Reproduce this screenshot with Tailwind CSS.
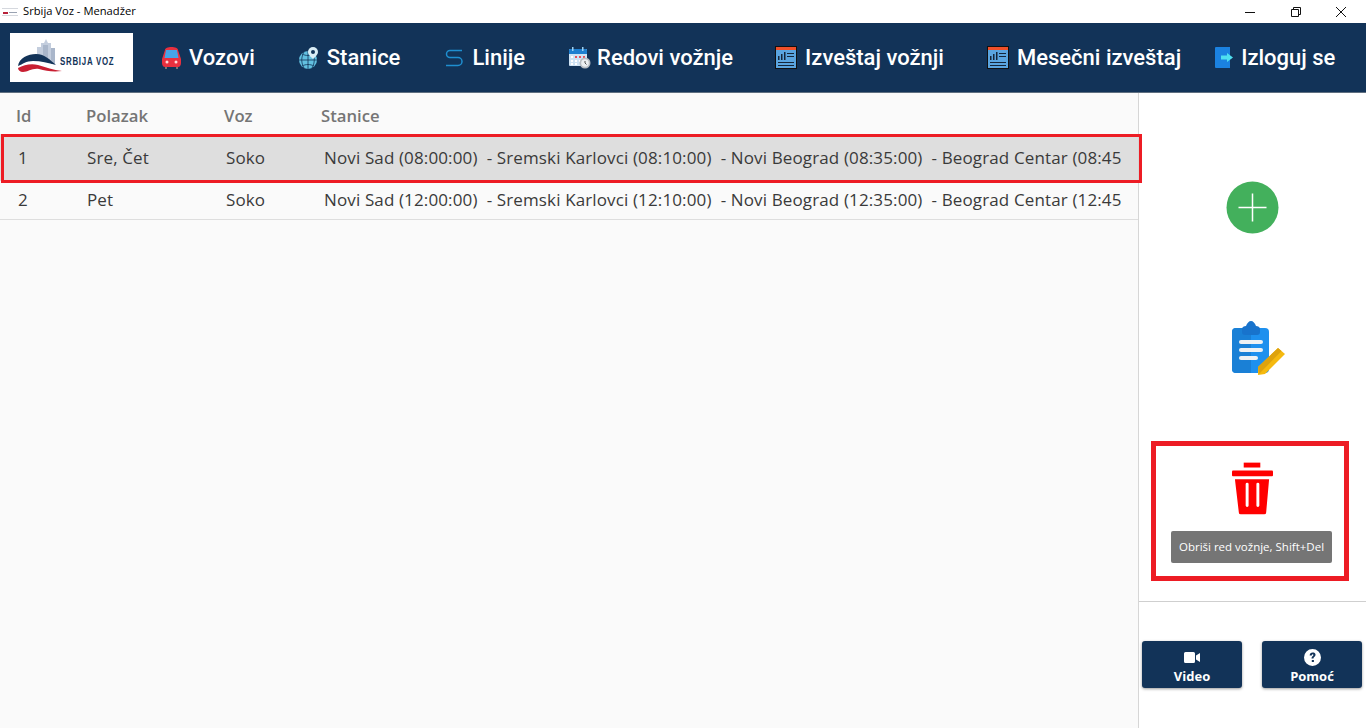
<!DOCTYPE html>
<html lang="en">
<head>
  <meta charset="UTF-8">
  <title>Srbija Voz - Menadžer</title>
  <script src="https://cdn.jsdelivr.net/npm/@tailwindcss/browser@4"></script>
</head>
<body class="bg-white overflow-hidden">
  <div class="relative w-[1366px] h-[728px] flex flex-col font-['Open_Sans',sans-serif]">
    <!-- title bar -->
    <div class="h-[23px] flex items-center bg-white">
      <svg class="ml-[2px] w-[16px] h-[10px]" viewBox="0 0 16 10">
        <rect x="0" y="1" width="16" height="1" fill="#d5d8de"/>
        <rect x="1" y="5" width="5" height="2" fill="#b8223a"/>
        <rect x="7" y="5" width="8" height="1" fill="#9aa3b2"/>
        <rect x="0" y="8" width="16" height="1" fill="#d5d8de"/>
      </svg>
      <span class="ml-[5px] text-[11.2px] text-black">Srbija Voz - Menadžer</span>
      <div class="ml-auto flex items-center">
        <svg class="w-[12px] h-[12px] mr-[34px]" viewBox="0 0 12 12"><path d="M1 6.500h10" stroke="#111" fill="none"/></svg>
        <svg class="w-[12px] h-[12px] mr-[33px]" viewBox="0 0 12 12"><path d="M1.500 3.500h7v7h-7zM3.500 3.500v-2h7v7h-2" stroke="#111" fill="none"/></svg>
        <svg class="w-[12px] h-[12px] mr-[19px]" viewBox="0 0 12 12"><path d="M1 1l10 10M11 1L1 11" stroke="#111" fill="none"/></svg>
      </div>
    </div>

    <!-- nav -->
    <nav class="h-[70px] flex items-center bg-[#123358] border-b border-[#5f6f80] text-white font-['Roboto',sans-serif] font-medium text-[22px] shrink-0">
      <div class="ml-[10px] w-[123px] h-[49px] bg-white flex items-center justify-center">
        <svg class="w-[123px] h-[49px]" viewBox="0 0 123 49">
          <path d="M27 14h4v-4h3l2-4 2 4h3v5h4v16l-18-6z" fill="#c3cddd"/>
          <path d="M33 12h5v17h-5zM41 15h4v16h-4z" fill="#a9b6ca"/>
          <path d="M8 33c1-8 10-12 18-12 9 0 14 6 20 11-8-2-15-4-23-4-7 0-10 3-15 5z" fill="#123358"/>
          <path d="M8 35c6-3 13-5 20-3 8 2 15 5 24 6-9 1-16 0-23-2-7-1-11 3-16 3-3 0-5-2-5-4z" fill="#c81f32"/>
          <text transform="translate(50 32) scale(.75 1)" font-family="Liberation Sans, sans-serif" font-size="10.500" font-weight="700" letter-spacing="1" fill="#123358">SRBIJA VOZ</text>
        </svg>
      </div>
      <!-- Vozovi -->
      <a class="ml-[29px] flex items-center">
        <svg class="w-[19px] h-[22px]" viewBox="0 0 19 22">
          <rect x="3" y="19" width="2" height="3" fill="#777"/><rect x="14" y="19" width="2" height="3" fill="#777"/>
          <path d="M3 3c0-2 3-3 6.500-3S16 1 16 3l3 9v4c0 2-1 4-3 4H3c-2 0-3-2-3-4v-4z" fill="#e8303f"/>
          <path d="M4 3h11l1.500 8h-14z" fill="#45a5e8"/>
          <circle cx="5" cy="15" r="1.500" fill="#ffd8d8"/><circle cx="14" cy="15" r="1.500" fill="#ffd8d8"/>
        </svg>
        <span class="ml-[8px]">Vozovi</span>
      </a>
      <!-- Stanice -->
      <a class="ml-[44px] flex items-center">
        <svg class="w-[20px] h-[22px]" viewBox="0 0 20 22">
          <circle cx="9" cy="13" r="9" fill="#62c0e0"/>
          <path d="M0 13h18M9 4v18M3 7c4 2 8 2 12 0M3 19c4-2 8-2 12 0M5 5c-3 5-3 11 0 16M13 5c3 5 3 11 0 16" stroke="#123358" stroke-width=".8" fill="none"/>
          <path d="M14 0a5 5 0 0 1 5 5c0 3-5 7-5 7s-5-4-5-7a5 5 0 0 1 5-5z" fill="#d9edf5"/>
          <circle cx="14" cy="5" r="2" fill="#123358"/>
        </svg>
        <span class="ml-[8px]">Stanice</span>
      </a>
      <!-- Linije -->
      <a class="ml-[45px] flex items-center">
        <svg class="w-[18px] h-[18px]" viewBox="0 0 18 18">
          <path d="M17 1.500H5a3.500 3.500 0 0 0 0 7h8a3.700 3.700 0 0 1 0 8H1" stroke="#1f8fd0" stroke-width="1.500" fill="none"/>
        </svg>
        <span class="ml-[9px]">Linije</span>
      </a>
      <!-- Redovi voznje -->
      <a class="ml-[44px] flex items-center">
        <svg class="w-[22px] h-[23px]" viewBox="0 0 22 23">
          <rect x="0" y="3" width="18" height="17" rx="1" fill="#cfe3f4"/>
          <path d="M0 4a1 1 0 0 1 1-1h16a1 1 0 0 1 1 1v4H0z" fill="#1e7fd0"/>
          <rect x="3" y="1" width="1.500" height="4" fill="#9dd0f0"/><rect x="13" y="1" width="1.500" height="4" fill="#9dd0f0"/>
          <path d="M6 10h2v2H6zM10 10h2v2h-2zM14 10h2v2h-2z" fill="#e8505a"/>
          <path d="M2 10h2v2H2zM2 14h2v2H2zM6 14h2v2H6zM10 14h2v2h-2zM2 17h2v2H2zM6 17h2v2H6z" fill="#fff"/>
          <circle cx="16" cy="17" r="5.500" fill="#b9bec4"/><circle cx="16" cy="17" r="3.800" fill="#eceff2"/>
          <path d="M16 15v2l1.500 1.500" stroke="#555" fill="none"/>
        </svg>
        <span class="ml-[6px]">Redovi vožnje</span>
      </a>
      <!-- Izvestaj voznji -->
      <a class="ml-[42px] flex items-center">
        <svg class="w-[22px] h-[23px]" viewBox="0 0 22 23">
          <rect x=".5" y=".5" width="21" height="22" fill="#5aa5e0" stroke="#111"/>
          <rect x="1" y="1" width="20" height="3" fill="#f0502a"/>
          <path d="M3 14V10h1.500v4zM6 14V8h1.500v6zM9 14V6h1.500v8zM12 7h7v1h-7zM12 10h7v1h-7zM3 16h16v1H3zM3 19h16v1H3z" fill="#15263a"/>
        </svg>
        <span class="ml-[8px]">Izveštaj vožnji</span>
      </a>
      <!-- Mesecni izvestaj -->
      <a class="ml-[43px] flex items-center">
        <svg class="w-[22px] h-[23px]" viewBox="0 0 22 23">
          <rect x=".5" y=".5" width="21" height="22" fill="#5aa5e0" stroke="#111"/>
          <rect x="1" y="1" width="20" height="3" fill="#f0502a"/>
          <path d="M3 14V10h1.500v4zM6 14V8h1.500v6zM9 14V6h1.500v8zM12 7h7v1h-7zM12 10h7v1h-7zM3 16h16v1H3zM3 19h16v1H3z" fill="#15263a"/>
        </svg>
        <span class="ml-[8px]">Mesečni izveštaj</span>
      </a>
      <!-- Izloguj se -->
      <a class="ml-[34px] flex items-center">
        <svg class="w-[18px] h-[21px]" viewBox="0 0 18 21">
          <path d="M0 1a1 1 0 0 1 1-1h14v21H1a1 1 0 0 1-1-1z" fill="#1b82e0"/>
          <path d="M6 8.500h6V6l6 4.500L12 15v-2.500H6z" fill="#4fe0f0"/>
        </svg>
        <span class="ml-[8px]">Izloguj se</span>
      </a>
    </nav>

    <!-- body -->
    <div class="flex-1 flex min-h-0">
      <main class="w-[1139px] bg-[#fafafa] border-r border-[#d6d6d6] shrink-0 overflow-hidden">
        <div class="h-[41px] pt-[5px] flex items-center text-[16.700px] font-semibold text-[#757575] pl-[16px]">
          <div class="w-[70px]">Id</div>
          <div class="w-[138px]">Polazak</div>
          <div class="w-[97px]">Voz</div>
          <div>Stanice</div>
        </div>
        <div class="h-[47px] flex items-center text-[17px] tracking-[0.13px] text-[#3a3a3a] pl-[18px] bg-[#dedede] whitespace-nowrap">
          <div class="w-[69px]">1</div>
          <div class="w-[139px]">Sre, Čet</div>
          <div class="w-[98px]">Soko</div>
          <div>Novi Sad (08:00:00) &nbsp;- Sremski Karlovci (08:10:00) &nbsp;- Novi Beograd (08:35:00) &nbsp;- Beograd Centar (08:45</div>
        </div>
        <div class="h-[39px] flex items-center text-[17px] tracking-[0.13px] text-[#3a3a3a] pl-[18px] border-b border-[#dedede] whitespace-nowrap">
          <div class="w-[69px]">2</div>
          <div class="w-[139px]">Pet</div>
          <div class="w-[98px]">Soko</div>
          <div>Novi Sad (12:00:00) &nbsp;- Sremski Karlovci (12:10:00) &nbsp;- Novi Beograd (12:35:00) &nbsp;- Beograd Centar (12:45</div>
        </div>
      </main>

      <aside class="flex-1 flex flex-col bg-white">
        <div class="h-[509px] flex flex-col items-center border-b border-[#cfcfcf]">
          <svg class="mt-[88px] w-[53px] h-[53px] shrink-0" viewBox="0 0 53 53">
            <circle cx="26.500" cy="26.500" r="26" fill="#43b05c"/>
            <path d="M26.500 12.500v28M12.500 26.500h28" stroke="#fff" stroke-width="1.500"/>
          </svg>
          <svg class="mt-[87px] ml-[12px] w-[54px] h-[54px] shrink-0" viewBox="0 0 54 54">
            <rect x="0" y="7" width="37" height="45" rx="4" fill="#1e90ee"/>
            <path d="M4 7h15v45H4a4 4 0 0 1-4-4V11a4 4 0 0 1 4-4z" fill="#1a80d6"/>
            <path d="M10 8c0-2 2-3 4-3 1-3 3-5 5-5s4 2 5 5c2 0 4 1 4 3v3a3 3 0 0 1-3 3H13a3 3 0 0 1-3-3z" fill="#1873cc"/>
            <rect x="7" y="19" width="24" height="4" rx="2" fill="#eef1f4"/>
            <rect x="7" y="27" width="24" height="4" rx="2" fill="#eef1f4"/>
            <rect x="7" y="35" width="19" height="4" rx="2" fill="#eef1f4"/>
            <path d="M26 46l20-19 7 6-20 20-7 1z" fill="#f5b90f"/>
            <path d="M26 46l20-19 3.500 3L27 53z" fill="#dea20c"/>
          </svg>
          <svg class="mt-[87px] w-[41px] h-[53px] shrink-0" viewBox="0 0 42 53">
            <rect x="12" y="0" width="17" height="5" fill="#ff0000"/>
            <rect x="0" y="8" width="42" height="6" rx="1" fill="#ff0000"/>
            <path fill-rule="evenodd" d="M3 17h35l-3 34a2 2 0 0 1-2 2H9a2 2 0 0 1-2-2zM14 22v22a1.500 1.500 0 0 0 3 0V22a1.500 1.500 0 0 0-3 0zM25 22v22a1.500 1.500 0 0 0 3 0V22a1.500 1.500 0 0 0-3 0z" fill="#ff0000"/>
          </svg>
        </div>
        <div class="flex pt-[39px] pl-[3px] gap-[20px]">
          <button class="w-[100px] h-[47px] pt-[8px] rounded-[3px] bg-[#123358] text-white text-[13px] font-bold flex flex-col items-center shadow-[0_1px_3px_rgba(0,0,0,0.4)]">
            <span class="h-[17px] flex items-center"><svg class="w-[16px] h-[11px]" viewBox="0 0 16 11"><path d="M0 1.500A1.500 1.500 0 0 1 1.500 0h8A1.500 1.500 0 0 1 11 1.500v8A1.500 1.500 0 0 1 9.500 11h-8A1.500 1.500 0 0 1 0 9.500zM12 3.500L16 1v9l-4-2.500z" fill="#fff"/></svg></span>
            <span class="mt-[2px] leading-[16px]">Video</span>
          </button>
          <button class="w-[100px] h-[47px] pt-[8px] rounded-[3px] bg-[#123358] text-white text-[13px] font-bold flex flex-col items-center shadow-[0_1px_3px_rgba(0,0,0,0.4)]">
            <span class="h-[17px] flex items-center"><svg class="w-[17px] h-[17px]" viewBox="0 0 24 24"><path fill-rule="evenodd" d="M12 0a12 12 0 1 1 0 24 12 12 0 0 1 0-24zM8 9h3c0-1 .4-1.500 1.200-1.500.7 0 1.100.4 1.100 1 0 1.500-2.800 1.800-2.800 5h2.800c0-2 3-2.500 3-5.300C16.300 5.800 14.500 5 12.200 5 9.700 5 8.100 6.500 8 9zM11 15.500v3h3v-3z" fill="#fff"/></svg></span>
            <span class="mt-[2px] leading-[16px]">Pomoć</span>
          </button>
        </div>
      </aside>
    </div>

    <!-- annotation overlays -->
    <div class="absolute left-[1px] top-[134px] w-[1141px] h-[49px] border-[3px] border-[#ed1c24]"></div>
    <div class="absolute left-[1151px] top-[441px] w-[198px] h-[140px] border-[5px] border-[#ed1c24]"></div>
    <div class="absolute left-[1171px] top-[531px] w-[161px] h-[32px] rounded-[2px] bg-[#757575] text-white text-[11.500px] flex items-center justify-center">Obriši red vožnje, Shift+Del</div>
  </div>
</body>
</html>
